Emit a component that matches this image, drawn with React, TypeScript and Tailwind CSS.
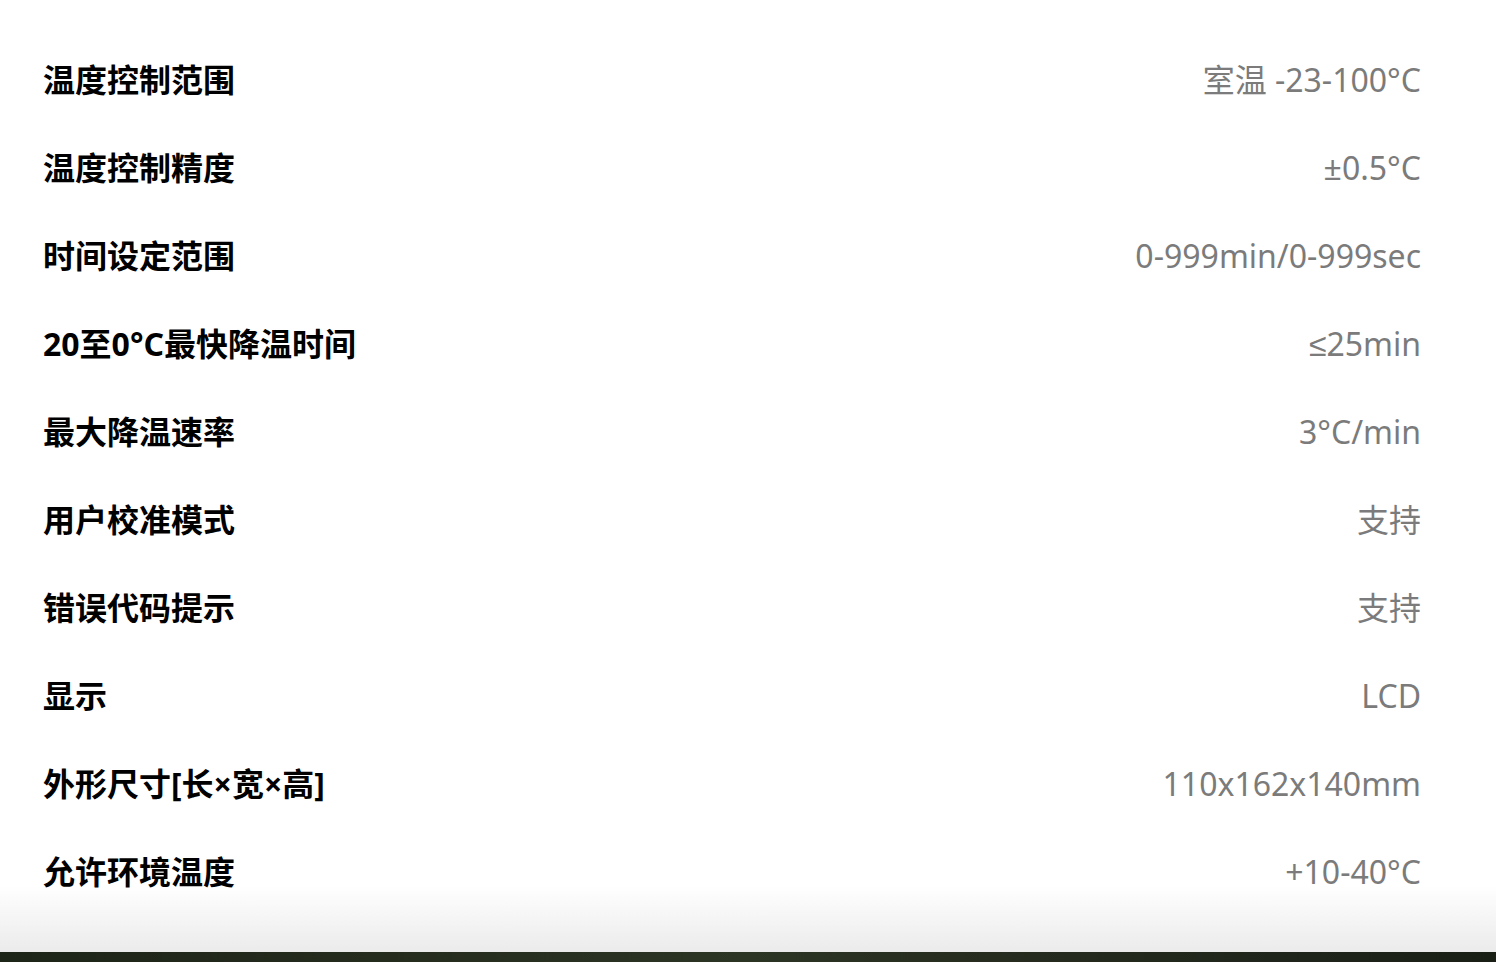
const specs: [string, string][] = [
  ['温度控制范围', '室温 -23-100°C'],
  ['温度控制精度', '±0.5°C'],
  ['时间设定范围', '0-999min/0-999sec'],
  ['20至0°C最快降温时间', '≤25min'],
  ['最大降温速率', '3°C/min'],
  ['用户校准模式', '支持'],
  ['错误代码提示', '支持'],
  ['显示', 'LCD'],
  ['外形尺寸[长×宽×高]', '110x162x140mm'],
  ['允许环境温度', '+10-40°C'],
];

export default function App() {
  return (
    <div className="flex h-[962px] w-full flex-col overflow-hidden bg-white font-['Noto_Sans','Noto_Sans_CJK_SC',sans-serif]">
      <div className="flex-1 bg-gradient-to-b from-white from-[93%] to-[#ebebeb] pt-[36px]">
        {specs.map(([label, value]) => (
          <div key={label} className="flex h-[88px] items-center justify-between pl-[43px] pr-[75px]">
            <span className="text-[32px] font-bold leading-none text-black">{label}</span>
            <span className="font-['Noto_Sans','Liberation_Sans','Noto_Sans_CJK_SC',sans-serif] text-[32px] leading-none text-[#7b7b7b]">
              {value}
            </span>
          </div>
        ))}
      </div>
      <div className="h-[10px] bg-gradient-to-r from-[#1d2418] via-[#2c3424] to-[#1a1f16]" />
    </div>
  );
}
